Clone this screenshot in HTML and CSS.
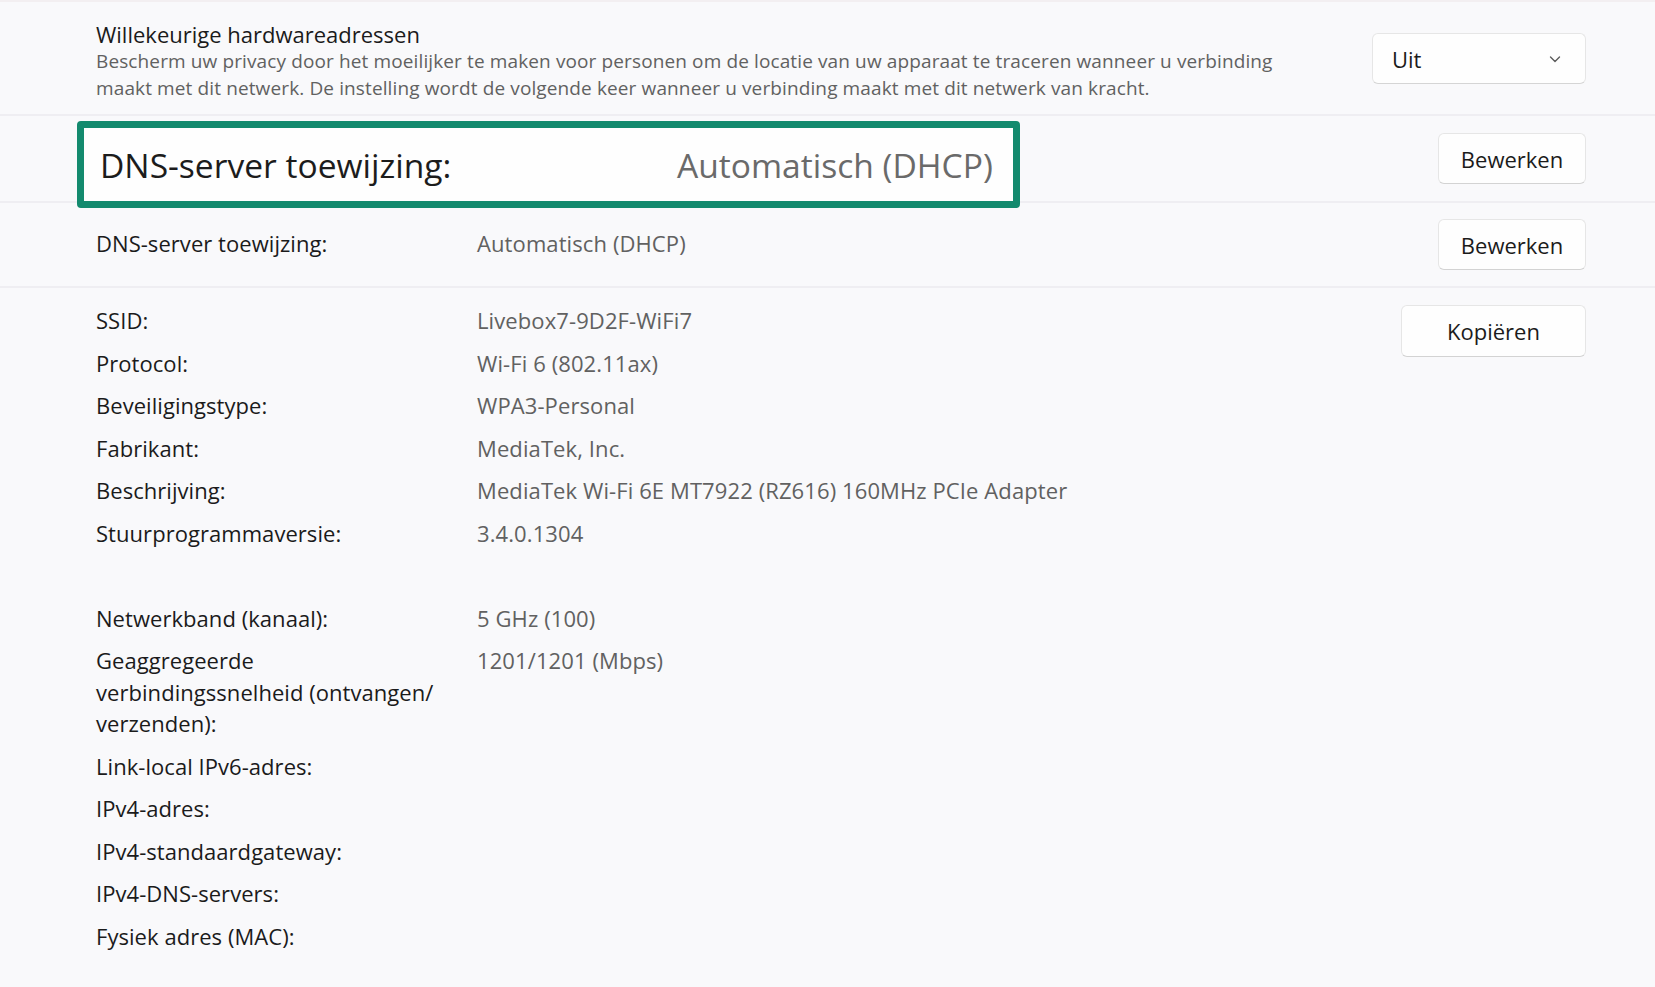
FILE: index.html
```html
<!DOCTYPE html>
<html lang="nl">
<head>
    <meta charset="UTF-8" />
    <meta name="viewport" content="width=device-width, initial-scale=1" />
    <title>Wi-Fi eigenschappen</title>
    <link rel="stylesheet" href="styles.css">
</head>
<body>
    <div class="page">
        <!-- Random hardware addresses -->
        <section class="setting">
            <div class="setting-text">
                <div class="setting-title">Willekeurige hardwareadressen</div>
                <div class="setting-desc">Bescherm uw privacy door het moeilijker te maken voor personen om de locatie van uw apparaat te traceren wanneer u verbinding<br>maakt met dit netwerk. De instelling wordt de volgende keer wanneer u verbinding maakt met dit netwerk van kracht.</div>
            </div>
            <div class="select">
                <span>Uit</span>
                <svg class="chevron" width="16" height="16" viewBox="0 0 16 16"><path d="M3.5 6 L8 10.5 L12.5 6" fill="none" stroke="#5c5c5c" stroke-width="1.4" stroke-linecap="round" stroke-linejoin="round"/></svg>
            </div>
        </section>

        <!-- row sitting under the callout -->
        <section class="row">
            <div class="row-label"></div>
            <div class="row-value"></div>
            <button class="btn btn-edit">Bewerken</button>
        </section>

        <section class="row">
            <div class="row-label">DNS-server toewijzing:</div>
            <div class="row-value">Automatisch (DHCP)</div>
            <button class="btn btn-edit">Bewerken</button>
        </section>

        <!-- Properties -->
        <section class="props">
            <div class="prop-list">
                <div class="prop-label">SSID:</div><div class="prop-value">Livebox7-9D2F-WiFi7</div>
                <div class="prop-label">Protocol:</div><div class="prop-value">Wi-Fi 6 (802.11ax)</div>
                <div class="prop-label">Beveiligingstype:</div><div class="prop-value">WPA3-Personal</div>
                <div class="prop-label">Fabrikant:</div><div class="prop-value">MediaTek, Inc.</div>
                <div class="prop-label">Beschrijving:</div><div class="prop-value">MediaTek Wi-Fi 6E MT7922 (RZ616) 160MHz PCIe Adapter</div>
                <div class="prop-label">Stuurprogrammaversie:</div><div class="prop-value">3.4.0.1304</div>
                <div class="prop-spacer"></div>
                <div class="prop-label">Netwerkband (kanaal):</div><div class="prop-value">5 GHz (100)</div>
                <div class="prop-label">Geaggregeerde verbindingssnelheid (ontvangen/<wbr>verzenden):</div><div class="prop-value">1201/1201 (Mbps)</div>
                <div class="prop-label">Link-local IPv6-adres:</div><div class="prop-value"></div>
                <div class="prop-label">IPv4-adres:</div><div class="prop-value"></div>
                <div class="prop-label">IPv4-standaardgateway:</div><div class="prop-value"></div>
                <div class="prop-label">IPv4-DNS-servers:</div><div class="prop-value"></div>
                <div class="prop-label">Fysiek adres (MAC):</div><div class="prop-value"></div>
            </div>
            <button class="btn btn-copy">Kopiëren</button>
        </section>

        <!-- highlighted callout -->
        <div class="callout">
            <div class="callout-label">DNS-server toewijzing:</div>
            <div class="callout-value">Automatisch (DHCP)</div>
        </div>
    </div>
</body>
</html>
```

FILE: styles.css
```css
body {
    margin: 0;
    background-color: #f9f9fb;
    font-family: "Open Sans", "Noto Sans", sans-serif;
    color: #1b1b1b;
}
.page {
    position: relative;
    width: 1655px;
    height: 987px;
    overflow: hidden;
}
.setting {
    display: flex;
    align-items: center;
    justify-content: space-between;
    height: 114px;
    padding: 6px 69px 0 96px;
    border-top: 2px solid #f3eff1;
    box-sizing: border-box;
}
.setting-title {
    font-size: 22px;
    line-height: 28px;
}
.setting-desc {
    font-size: 19px;
    letter-spacing: 0.12px;
    line-height: 27px;
    color: #616161;
}
.select {
    width: 214px;
    height: 51px;
    box-sizing: border-box;
    display: flex;
    align-items: center;
    justify-content: space-between;
    padding: 0 22px 0 19px;
    background-color: #fefefe;
    border: 1px solid #e6e6e6;
    border-bottom-color: #d5d5d5;
    border-radius: 6px;
    font-size: 22px;
    margin-top: -5px;
}
.chevron {
    display: block;
}
.row {
    display: grid;
    grid-template-columns: 381px 1fr auto;
    align-items: center;
    padding: 0 69px 0 96px;
    border-top: 2px solid #efeef2;
    height: 87px;
    box-sizing: border-box;
}
.row + .row {
    height: 85px;
}
.row-label, .prop-label {
    font-size: 22px;
    letter-spacing: 0.05px;
    color: #1b1b1b;
}
.row-value, .prop-value {
    font-size: 22px;
    letter-spacing: 0.1px;
    color: #616161;
}
.row-value, .row-label {
    margin-top: -4px;
}
.btn {
    font-family: inherit;
    font-size: 22px;
    color: #1b1b1b;
    background-color: #fefefe;
    border: 1px solid #e6e6e6;
    border-bottom-color: #d3d3d3;
    border-radius: 6px;
    height: 51px;
    padding: 0;
    cursor: pointer;
}
.btn-edit {
    width: 148px;
}
.btn-copy {
    width: 185px;
    height: 52px;
}
.props {
    display: flex;
    justify-content: space-between;
    align-items: flex-start;
    padding: 17px 69px 0 96px;
    border-top: 2px solid #efeef2;
}
.prop-list {
    display: grid;
    grid-template-columns: 350px auto;
    column-gap: 31px;
    row-gap: 11px;
    line-height: 31.5px;
}
.prop-spacer {
    grid-column: span 2;
    height: 31.5px;
}
.callout {
    position: absolute;
    left: 77px;
    top: 121px;
    width: 943px;
    height: 87px;
    box-sizing: border-box;
    border: 7px solid #138a6e;
    border-radius: 4px;
    background-color: #fefefe;
    display: grid;
    grid-template-columns: 577px auto;
    align-items: center;
    padding-left: 16px;
    font-size: 33.6px;
}
.callout-label {
    color: #1c1c1c;
}
.callout-value {
    color: #6a6a6a;
}
```
